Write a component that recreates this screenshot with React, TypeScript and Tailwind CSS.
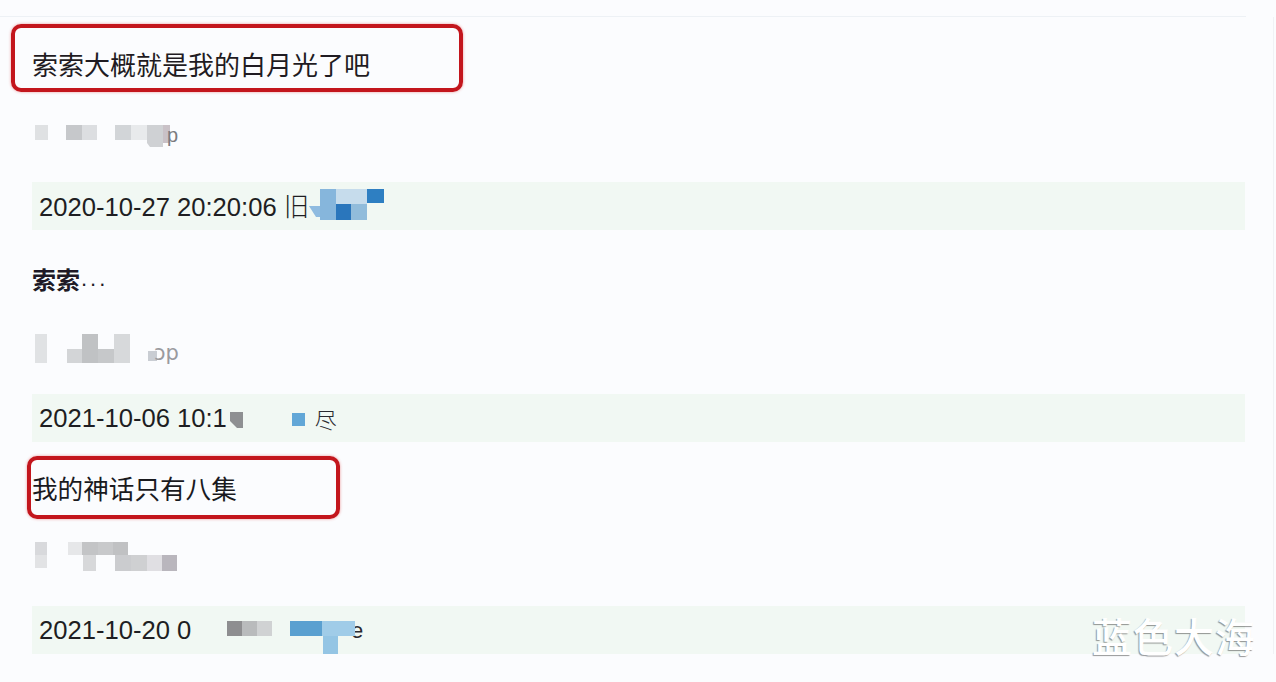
import React from "react";

const cjk = { fontFamily: '"Noto Sans CJK SC", "Noto Sans", sans-serif' };
const num = { fontFamily: '"Liberation Sans", "Noto Sans CJK SC", sans-serif' };

function Mosaic1() {
  return (
    <svg width="170" height="30" viewBox="0 0 170 30" className="block">
      <rect x="3" y="4" width="13" height="15" fill="#dfe1e3" />
      <rect x="34" y="4" width="16" height="15" fill="#c6c8cb" />
      <rect x="50" y="4" width="15" height="15" fill="#dcdee1" />
      <rect x="83" y="4" width="16" height="15" fill="#d2d5d8" />
      <rect x="99" y="4" width="16" height="15" fill="#e8eaec" />
      <polygon points="115,4 131,4 131,26 118,26 115,22" fill="#cfd1d4" />
      <rect x="131" y="4" width="7" height="18" fill="#c9c1c7" />
      <text x="135" y="21" fontSize="20" fill="#7b7b80" fontFamily="Liberation Sans, sans-serif">p</text>
    </svg>
  );
}

function Mosaic2() {
  return (
    <svg width="170" height="35" viewBox="0 0 170 35" className="block">
      <rect x="3" y="3" width="12" height="29" fill="#e0e2e4" />
      <rect x="35" y="18" width="15" height="14" fill="#d3d5d7" />
      <rect x="50" y="3" width="16" height="29" fill="#c0c2c4" />
      <rect x="66" y="18" width="16" height="14" fill="#c6c8ca" />
      <rect x="82" y="3" width="16" height="29" fill="#d7d9db" />
      <rect x="116" y="20" width="9" height="10" fill="#c9cdd3" />
      <text x="122" y="29" fontSize="21" fill="#9a9a9e" fontFamily="DejaVu Sans, sans-serif">ɔp</text>
    </svg>
  );
}

function Mosaic3() {
  return (
    <svg width="170" height="35" viewBox="0 0 170 35" className="block">
      <rect x="3" y="3" width="12" height="13" fill="#d8d9dc" />
      <rect x="3" y="16" width="12" height="13" fill="#e2e3e5" />
      <rect x="36" y="3" width="14" height="13" fill="#e6e7e9" />
      <rect x="50" y="3" width="16" height="13" fill="#c3c4c6" />
      <rect x="66" y="3" width="15" height="13" fill="#c8c9cb" />
      <rect x="81" y="3" width="15" height="13" fill="#c0c1c3" />
      <rect x="51" y="16" width="13" height="16" fill="#d7d8da" />
      <rect x="83" y="16" width="16" height="16" fill="#cbcccf" />
      <rect x="99" y="16" width="16" height="16" fill="#cfd0d2" />
      <rect x="115" y="16" width="15" height="16" fill="#e0dfe3" />
      <rect x="130" y="16" width="15" height="16" fill="#b9b6bd" />
    </svg>
  );
}

export default function App() {
  return (
    <div className="relative w-[1276px] h-[682px] overflow-hidden bg-[#fbfcfe]">
      <div className="h-[17px] border-b border-[#edf1f5] mr-[30px]" />
      <div className="flex flex-col border-r border-[#f0f2f5] mr-[2px]">
        {/* red box 1 */}
        <div
          className="ml-[11px] mt-[7px] w-[452px] h-[68px] border-[4px] border-[#c3161d] rounded-[10px] shadow-[0_0_3px_rgba(220,30,30,0.45)] flex items-center pl-[17px] pt-[12px]"
          style={cjk}
        >
          <span className="text-[26px] leading-[26px] text-[#1f1b22]">索索大概就是我的白月光了吧</span>
        </div>

        <div className="ml-[32px] mt-[29px]">
          <Mosaic1 />
        </div>

        {/* bar 1 */}
        <div className="ml-[32px] mt-[31px] w-[1213px] h-[48px] bg-[#f1f8f3] flex items-center pl-[7px]">
          <span className="text-[25.6px] leading-[26px] text-[#1e1e22]" style={num}>
            2020-10-27 20:20:06 <span className="font-light" style={cjk}>旧</span>
          </span>
          <svg width="80" height="48" viewBox="0 0 80 48" className="block">
            <polygon points="0,24 12,24 12,35 7,35" fill="#8fbbe0" />
            <rect x="11" y="7" width="16" height="31" fill="#86b6dc" />
            <rect x="27" y="7" width="31" height="15" fill="#c6dcec" />
            <rect x="58" y="7" width="17" height="14" fill="#2e7fc2" />
            <rect x="27" y="22" width="15" height="16" fill="#2a76bc" />
            <rect x="42" y="22" width="16" height="16" fill="#91bcdb" />
          </svg>
        </div>

        <div className="ml-[32px] mt-[29px] h-[40px] flex items-center text-[#201a26]">
          <span className="text-[24px] leading-[24px] font-semibold" style={cjk}>索索</span>
          <span className="text-[22px] leading-[24px] tracking-[3px] ml-[1px]" style={num}>...</span>
        </div>

        <div className="ml-[32px] mt-[32px]">
          <Mosaic2 />
        </div>

        {/* bar 2 */}
        <div className="ml-[32px] mt-[28px] w-[1213px] h-[48px] bg-[#f1f8f3] flex items-center pl-[7px]">
          <span className="text-[25.6px] leading-[26px] text-[#1e1e22]" style={num}>2021-10-06 10:1</span>
          <svg width="62" height="48" viewBox="0 0 62 48" className="block">
            <polygon points="3,18 16,18 16,34 10,34 3,27" fill="#8e9092" />
          </svg>
          <svg width="26" height="48" viewBox="0 0 26 48" className="block">
            <rect x="3" y="19" width="13" height="13" fill="#62a7d7" />
          </svg>
          <span className="text-[22px] leading-[22px] font-light text-[#2a2a30]" style={cjk}>尽</span>
        </div>

        {/* red box 2 */}
        <div
          className="ml-[27px] mt-[14px] w-[313px] h-[63px] border-[4px] border-[#c3161d] rounded-[10px] shadow-[0_0_3px_rgba(220,30,30,0.45)] flex items-center pl-[1px]"
          style={cjk}
        >
          <span className="text-[25.6px] leading-[26px] text-[#1a1a1e]">我的神话只有八集</span>
        </div>

        <div className="ml-[32px] mt-[20px]">
          <Mosaic3 />
        </div>

        {/* bar 3 */}
        <div className="ml-[32px] mt-[32px] w-[1213px] h-[48px] bg-[#f1f8f3] flex items-center pl-[7px]">
          <span className="text-[25.6px] leading-[26px] text-[#1e1e22]" style={num}>2021-10-20 0</span>
          <svg width="180" height="48" viewBox="0 0 180 48" className="block">
            <rect x="36" y="15" width="15" height="15" fill="#8e8e90" />
            <rect x="51" y="15" width="15" height="15" fill="#b9bbbc" />
            <rect x="66" y="15" width="15" height="15" fill="#d0d2d3" />
            <text x="160" y="32" fontSize="22" fill="#2a2a30" fontFamily="Liberation Sans, sans-serif">e</text>
            <rect x="99" y="15" width="32" height="15" fill="#5aa0d0" />
            <rect x="131" y="15" width="33" height="15" fill="#a0cce8" />
            <rect x="132" y="30" width="15" height="18" fill="#94c5e4" />
          </svg>
        </div>
      </div>

      <div
        className="absolute left-[1092px] top-[610px] text-[40px] leading-[50px] font-medium text-white tracking-[1px] [text-shadow:-1px_1px_1px_rgba(0,0,0,0.4)]"
        style={cjk}
      >
        蓝色大海
      </div>
    </div>
  );
}
